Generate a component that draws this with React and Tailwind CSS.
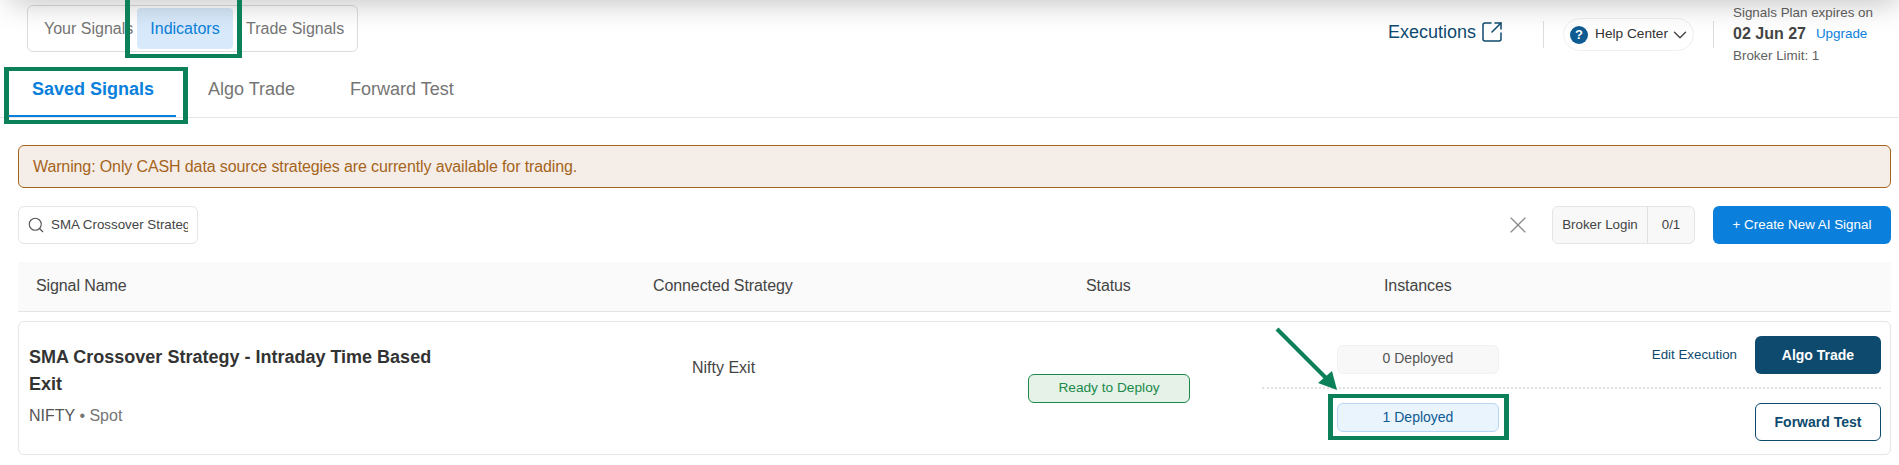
import React from 'react';
import { Search, X, SquareArrowOutUpRight, ChevronDown } from 'lucide-react';

function SubTab({ children, active, className = '' }) {
  return (
    <div className={`text-[18px] leading-[22px] ${active ? 'font-bold text-[#0a7fdb]' : 'text-[#757575]'} ${className}`}>
      {children}
    </div>
  );
}

function Annotation({ className }) {
  return <div className={`absolute border-x-[5px] border-y-4 border-[#0b8059] pointer-events-none ${className}`} />;
}

export default function App() {
  return (
    <div className="relative h-[465px] w-full overflow-hidden bg-white font-['Liberation_Sans',Arial,sans-serif] text-[#333]">
      <div className="absolute -top-[30px] left-[10px] right-0 h-[30px] shadow-[0_2px_30px_rgba(0,0,0,0.26)]" />

      {/* top bar */}
      <div className="flex h-[52px] items-start justify-between pl-[27px]">
        <div className="mt-[5px] flex h-[47px] w-[331px] items-center rounded-md border border-[#dcdcdc] text-[16px] text-[#757575]">
          <div className="w-[109px] pl-4">Your Signals</div>
          <div className="flex h-[41px] w-[96px] items-center justify-center rounded bg-[#d7e9fa] text-[#0a7fdb]">Indicators</div>
          <div className="pl-[13px]">Trade Signals</div>
        </div>

        <div className="flex items-start">
          <div className="mt-[20px] flex items-center text-[18px] leading-[24px] text-[#0e4a6e]">
            Executions
            <SquareArrowOutUpRight className="ml-[4px] h-[24px] w-[24px]" strokeWidth={1.5} />
          </div>
          <div className="ml-[39px] mt-[21px] h-[27px] w-px bg-[#dddddd]" />
          <div className="ml-[19px] mt-[18px] flex h-[33px] w-[131px] items-center rounded-full border border-[#efefef] pl-[6px] text-[14px] text-[#333]">
            <div className="flex h-[18px] w-[18px] shrink-0 items-center justify-center rounded-full bg-[#0e5a92] text-[13px] font-bold text-white">?</div>
            <span className="ml-[7px] whitespace-nowrap text-[13.7px]">Help Center</span>
            <ChevronDown className="ml-[1px] h-[22px] w-[22px] shrink-0 text-[#444]" strokeWidth={1.5} />
          </div>
          <div className="ml-[19px] mt-[21px] h-[27px] w-px bg-[#dddddd]" />
          <div className="ml-[19px] w-[166px] pt-[4px] text-[13.4px] leading-[18px] text-[#616161]">
            <div>Signals Plan expires on</div>
            <div className="mt-[2px] flex h-[20px] items-center">
              <span className="text-[16px] font-bold text-[#444]">02 Jun 27</span>
              <span className="ml-[10px] text-[#0a7fdb]">Upgrade</span>
            </div>
            <div className="mt-[3px]">Broker Limit: 1</div>
          </div>
        </div>
      </div>

      <div className="pl-[18px] pr-[8px]">
        {/* sub tabs */}
        <div className="-ml-[18px] -mr-[8px] flex h-[66px] items-start border-b border-[#e5e5e5] pl-[9px]">
          <div className="h-[65px] w-[167px] border-b-2 border-[#0a7fdb] pl-[23px] pt-[26px]">
            <SubTab active>Saved Signals</SubTab>
          </div>
          <SubTab className="ml-[32px] mt-[26px]">Algo Trade</SubTab>
          <SubTab className="ml-[55px] mt-[26px]">Forward Test</SubTab>
        </div>

        {/* warning */}
        <div className="mt-[27px] flex h-[43px] items-center rounded-md border border-[#a5641b] bg-[#f5eee8] pl-[14px] text-[16px] tracking-[-0.12px] text-[#a5641b]">
          Warning: Only CASH data source strategies are currently available for trading.
        </div>

        {/* toolbar */}
        <div className="mt-[18px] flex h-[38px] items-center">
          <div className="flex h-[38px] w-[180px] items-center rounded-md border border-[#e5e5e5] pl-[8px] pr-[9px] text-[13.33px] text-[#444]">
            <Search className="h-[18px] w-[18px] shrink-0 text-[#555]" strokeWidth={1.5} />
            <span className="ml-[6px] overflow-hidden whitespace-nowrap">SMA Crossover Strategy - Intraday</span>
          </div>
          <X className="ml-auto h-[28px] w-[28px] text-[#888]" strokeWidth={1} />
          <div className="ml-[20px] flex h-[38px] w-[143px] items-center rounded-md border border-[#e5e5e5] bg-[#f8f8f8] text-[13.33px] text-[#444]">
            <div className="flex h-full w-[95px] items-center justify-center border-r border-[#e0e0e0]">Broker Login</div>
            <div className="flex-1 text-center">0/1</div>
          </div>
          <button className="ml-[18px] flex h-[38px] w-[178px] items-center justify-center rounded-md bg-[#0a7fdb] text-[13.4px] text-white">+ Create New AI Signal</button>
        </div>

        {/* table head */}
        <div className="mt-[18px] grid h-[50px] grid-cols-[617px_433px_298px_1fr] items-center border-b border-[#e5e5e5] bg-[#fafafa] pb-[2px] pl-[18px] text-[16px] tracking-[-0.1px] text-[#444]">
          <div>Signal Name</div>
          <div>Connected Strategy</div>
          <div>Status</div>
          <div>Instances</div>
        </div>

        {/* row */}
        <div className="mt-[9px] flex h-[134px] rounded-md border border-[#e5e5e5]">
          <div className="w-[660px] pl-[10px] pt-[22px]">
            <div className="w-[440px] text-[18px] font-bold leading-[27px] text-[#333]">SMA Crossover Strategy - Intraday Time Based Exit</div>
            <div className="mt-[8px] text-[16px] leading-[20px] text-[#757575]"><span className="text-[#555]">NIFTY</span> • Spot</div>
          </div>
          <div className="w-[349px] pl-[13px] pt-[34px] text-[16px] text-[#444]">Nifty Exit</div>
          <div className="pt-[52px]">
            <div className="flex h-[29px] w-[162px] items-center justify-center rounded-md border border-[#1a8a4a] bg-[#e6f2e8] text-[13.7px] text-[#1a8a4a]">Ready to Deploy</div>
          </div>
          <div className="ml-[72px] flex w-[619px] flex-col pt-[14px]">
            <div className="flex h-[53px] items-start border-b-2 border-dotted border-[#e0e0e0]">
              <div className="ml-[75px] mt-[9px] flex h-[29px] w-[162px] items-center justify-center rounded-md border border-[#f2f2f2] bg-[#f8f8f8] pb-[2px] text-[14px] text-[#555]">0 Deployed</div>
              <div className="ml-auto whitespace-nowrap pt-[9px] text-[13.33px] text-[#0e4a6e]">Edit Execution</div>
              <button className="ml-[18px] flex h-[38px] w-[126px] items-center justify-center rounded-md bg-[#0e4a6e] text-[14px] font-bold text-white">Algo Trade</button>
            </div>
            <div className="flex items-start justify-between">
              <div className="ml-[75px] mt-[14px] flex h-[29px] w-[162px] items-center justify-center rounded-md border border-[#b5d7f5] bg-[#e9f4fd] text-[14px] text-[#0e5a92]">1 Deployed</div>
              <button className="mt-[14px] flex h-[38px] w-[126px] items-center justify-center rounded-md border border-[#0e4a6e] bg-white text-[14px] font-bold text-[#0e4a6e]">Forward Test</button>
            </div>
          </div>
        </div>
      </div>

      {/* green callouts drawn over the page */}
      <Annotation className="left-[125px] -top-[4px] h-[62px] w-[117px]" />
      <Annotation className="left-[4px] top-[67px] h-[57px] w-[184px]" />
      <Annotation className="left-[1328px] top-[394px] h-[46px] w-[181px]" />
      <svg className="absolute left-[1270px] top-[322px]" width="80" height="75" viewBox="0 0 80 75" fill="none">
        <line x1="7" y1="7" x2="57" y2="57" stroke="#0b8059" strokeWidth="4" />
        <polygon points="67,68 62,49 48,61" fill="#0b8059" />
      </svg>
    </div>
  );
}
